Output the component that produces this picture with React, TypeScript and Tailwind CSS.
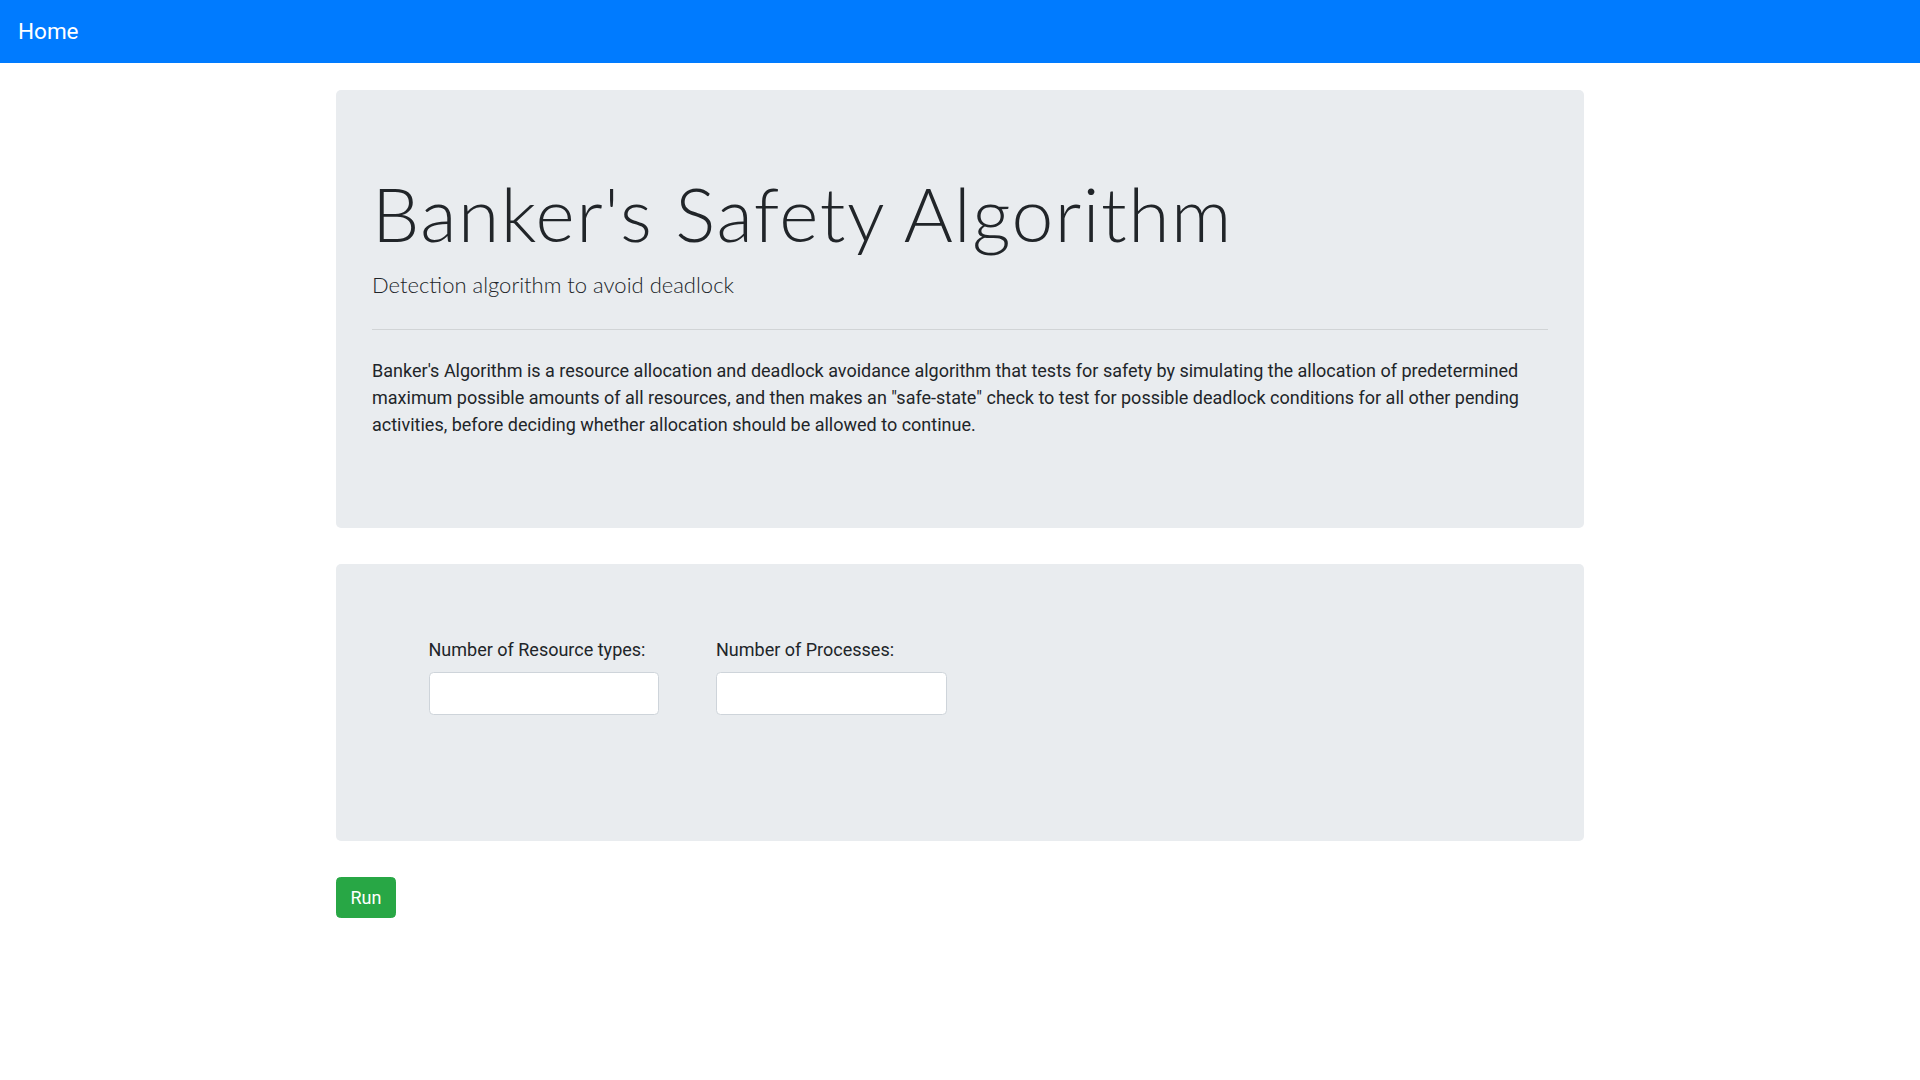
import React from "react";

export default function App() {
  return (
    <div className="min-h-screen bg-white text-[#212529] font-['Roboto',sans-serif]">
      <nav className="h-[63px] bg-[#007bff] px-[18px] flex items-center">
        <a className="text-[22.5px] leading-[33.75px] text-white font-['Roboto',sans-serif]">Home</a>
      </nav>

      <main className="w-[1248px] mx-auto pt-[27px]">
        <section className="bg-[#e9ecef] rounded-[5px] px-[36px] py-[72px] mb-[36px]">
          <h1 className="font-['Lato',sans-serif] font-light text-[75px] tracking-[1.5px] pt-[6px] leading-[91px] mb-[9px] whitespace-nowrap">
            Banker's Safety Algorithm
          </h1>
          <p className="font-['Lato',sans-serif] font-light text-[22px] leading-[33.75px]">
            Detection algorithm to avoid deadlock
          </p>
          <hr className="my-[27px] border-0 border-t border-black/10" />
          <p className="text-[18px] leading-[27px] mb-[18px]">
            Banker's Algorithm is a resource allocation and deadlock avoidance algorithm that tests for safety by simulating the allocation of predetermined maximum possible amounts of all resources, and then makes an "safe-state" check to test for possible deadlock conditions for all other pending activities, before deciding whether allocation should be allowed to continue.
          </p>
        </section>

        <section className="bg-[#e9ecef] rounded-[5px] pl-[92.5px] pr-[36px] pt-[72px] pb-[126px] mb-[36px]">
          <div className="flex gap-[57px]">
            <div className="flex flex-col">
              <label className="text-[18px] leading-[27px] mb-[9px]">Number of Resource types:</label>
              <input type="text" className="w-[230.5px] h-[43px] bg-white border border-[#ced4da] rounded-[4.5px] px-[13.5px] text-[18px] outline-none" />
            </div>
            <div className="flex flex-col">
              <label className="text-[18px] leading-[27px] mb-[9px]">Number of Processes:</label>
              <input type="text" className="w-[230.5px] h-[43px] bg-white border border-[#ced4da] rounded-[4.5px] px-[13.5px] text-[18px] outline-none" />
            </div>
          </div>
        </section>

        <button className="h-[41px] px-[13.5px] bg-[#28a745] border border-[#28a745] text-white text-[18px] leading-[27px] rounded-[4.5px]">
          Run
        </button>
      </main>
    </div>
  );
}
